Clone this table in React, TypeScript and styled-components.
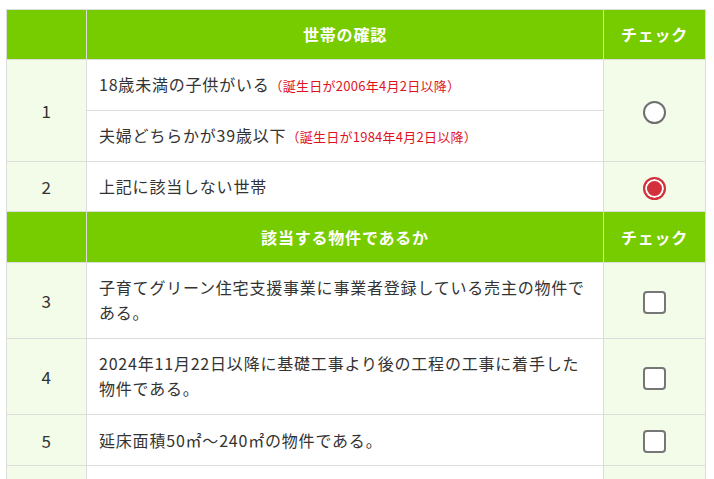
import React from "react";
import styled, { createGlobalStyle } from "styled-components";

const GlobalStyle = createGlobalStyle`
  html, body { margin: 0; padding: 0; background: #ffffff; }
  body {
    font-family: "Noto Sans CJK JP", "Noto Sans", sans-serif;
    color: #333333;
  }
`;

const Page = styled.div`
  padding: 9px 9px 0 6px;
`;

const Table = styled.table`
  width: 700px;
  border-collapse: collapse;
  table-layout: fixed;
  font-size: 16px;
  line-height: 25px;
  letter-spacing: 0.05em;
`;

const HeadCell = styled.th<{ $h: number }>`
  background: #77cc00;
  color: #ffffff;
  font-weight: 700;
  height: ${(p) => p.$h}px;
  padding: 0 12px;
  border: 1px solid #dcdcdc;
  text-align: center;
  vertical-align: middle;
`;

const NumCell = styled.td`
  background: #f3fbe9;
  border: 1px solid #dcdcdc;
  text-align: center;
  vertical-align: middle;
  padding: 12px 0;
  font-size: 17px;
`;

const TextCell = styled.td<{ $pt?: number; $pb?: number }>`
  background: #ffffff;
  border: 1px solid #dcdcdc;
  padding: ${(p) => p.$pt ?? 12}px 12px ${(p) => p.$pb ?? 12}px;
  vertical-align: middle;
  text-align: left;
`;

const CheckCell = styled.td`
  background: #f3fbe9;
  border: 1px solid #dcdcdc;
  text-align: center;
  vertical-align: middle;
  padding: 0;
`;

const Note = styled.span`
  color: #e0141e;
  font-size: 13px;
  letter-spacing: 0.02em;
`;

const Radio = styled.span<{ $checked?: boolean }>`
  display: inline-block;
  vertical-align: middle;
  width: 23px;
  height: 23px;
  box-sizing: border-box;
  border-radius: 50%;
  border: 2px solid ${(p) => (p.$checked ? "#d2303a" : "#6f6f6f")};
  background: ${(p) => (p.$checked ? "#d2303a" : "#ffffff")};
  box-shadow: ${(p) => (p.$checked ? "inset 0 0 0 2px #ffffff" : "none")};
`;

const Checkbox = styled.span`
  display: inline-block;
  vertical-align: middle;
  width: 23px;
  height: 23px;
  box-sizing: border-box;
  border-radius: 4px;
  border: 2px solid #767676;
  background: #ffffff;
`;

const rows = [
  { n: 3, text: "子育てグリーン住宅支援事業に事業者登録している売主の物件である。", pt: 12, pb: 13 },
  { n: 4, text: "2024年11月22日以降に基礎工事より後の工程の工事に着手した物件である。", pt: 12, pb: 13 },
  { n: 5, text: "延床面積50㎡〜240㎡の物件である。", pt: 13, pb: 12 },
  { n: 6, text: "土砂災害特別警戒区域外の物件である。", pt: 12, pb: 12 },
];

export default function App() {
  return (
    <>
      <GlobalStyle />
      <Page>
        <Table>
          <colgroup>
            <col style={{ width: "80px" }} />
            <col />
            <col style={{ width: "102px" }} />
          </colgroup>
          <tbody>
            <tr>
              <HeadCell $h={49} />
              <HeadCell $h={49}>世帯の確認</HeadCell>
              <HeadCell $h={49}>チェック</HeadCell>
            </tr>
            <tr>
              <NumCell rowSpan={2}>1</NumCell>
              <TextCell>
                18歳未満の子供がいる<Note>（誕生日が2006年4月2日以降）</Note>
              </TextCell>
              <CheckCell rowSpan={2}>
                <Radio />
              </CheckCell>
            </tr>
            <tr>
              <TextCell>
                夫婦どちらかが39歳以下<Note>（誕生日が1984年4月2日以降）</Note>
              </TextCell>
            </tr>
            <tr>
              <NumCell>2</NumCell>
              <TextCell>上記に該当しない世帯</TextCell>
              <CheckCell>
                <Radio $checked />
              </CheckCell>
            </tr>
            <tr>
              <HeadCell $h={50} />
              <HeadCell $h={50}>該当する物件であるか</HeadCell>
              <HeadCell $h={50}>チェック</HeadCell>
            </tr>
            {rows.map((r) => (
              <tr key={r.n}>
                <NumCell>{r.n}</NumCell>
                <TextCell $pt={r.pt} $pb={r.pb}>
                  {r.text}
                </TextCell>
                <CheckCell>
                  <Checkbox />
                </CheckCell>
              </tr>
            ))}
          </tbody>
        </Table>
      </Page>
    </>
  );
}
